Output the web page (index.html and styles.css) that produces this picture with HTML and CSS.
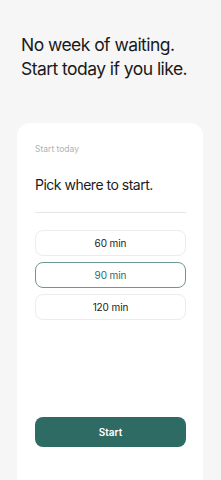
FILE: index.html
```html
<!DOCTYPE html>
<html lang="en">
<head>
<meta charset="utf-8">
<meta name="viewport" content="width=device-width, initial-scale=1">
<link rel="stylesheet" href="styles.css">
</head>
<body>
<main class="page">
  <h1 class="headline">No week of waiting.<br>Start today if you like.</h1>
  <section class="card">
    <p class="eyebrow">Start today</p>
    <h2 class="title">Pick where to start.</h2>
    <hr class="divider">
    <div class="options">
      <button class="option">60 min</button>
      <button class="option option--selected">90 min</button>
      <button class="option">120 min</button>
    </div>
    <button class="start">Start</button>
  </section>
</main>
</body>
</html>
```

FILE: styles.css
```css
* { box-sizing: border-box; }
html, body {
  margin: 0;
  padding: 0;
  height: 100%;
  overflow: hidden;
}
body {
  background: #f6f6f6;
  font-family: Inter, "Noto Sans", sans-serif;
  color: #1c1c1c;
}
.page {
  height: 100vh;
  display: flex;
  flex-direction: column;
}
.headline {
  margin: 33px 0 0 21px;
  font-size: 17.5px;
  line-height: 24px;
  font-weight: 400;
  letter-spacing: -0.55px;
  color: #1a1a1a;
}
.card {
  flex: 1;
  margin: 42px 18px -20px 17px;
  background: #ffffff;
  border-radius: 13px;
  padding: 21px 17px 53px 18px;
  display: flex;
  flex-direction: column;
}
.eyebrow {
  margin: 0;
  font-size: 8.5px;
  line-height: 10px;
  color: #b2b2b2;
}
.title {
  margin: 21px 0 0;
  font-size: 14px;
  line-height: 20px;
  font-weight: 400;
  letter-spacing: -0.5px;
  color: #1c1c1c;
}
.divider {
  border: 0;
  border-top: 1px solid #e6e6e6;
  margin: 17px 0 0;
}
.options {
  margin-top: 17px;
  display: flex;
  flex-direction: column;
  gap: 6px;
}
.option {
  height: 26px;
  border: 1px solid #ececec;
  border-radius: 8px;
  background: #fff;
  font-family: inherit;
  font-size: 10px;
  letter-spacing: -0.1px;
  color: #222;
  padding: 0;
}
.option--selected {
  border-color: #6e9691;
  color: #2f6b64;
}
.start {
  margin-top: auto;
  height: 30px;
  border: 0;
  border-radius: 8px;
  background: #2f6b65;
  color: #fff;
  font-family: inherit;
  font-size: 10px;
  font-weight: 600;
}
```
